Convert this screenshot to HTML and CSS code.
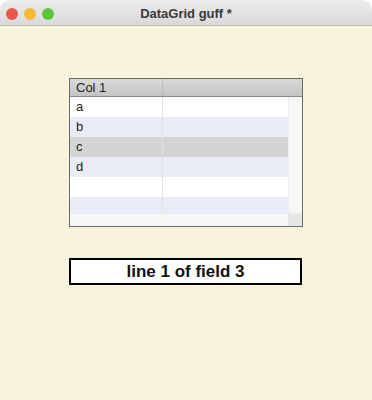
FILE: index.html
```html
<!DOCTYPE html>
<html>
<head>
<meta charset="utf-8">
<link rel="stylesheet" href="styles.css">
</head>
<body>
<div class="window">
  <div class="titlebar">
    <div class="lights">
      <span class="light red"></span>
      <span class="light yellow"></span>
      <span class="light green"></span>
    </div>
    <div class="title">DataGrid guff *</div>
  </div>
  <div class="content">
    <div class="grid">
      <div class="header">
        <div class="hcell c1">Col 1</div>
        <div class="hcell c2"></div>
      </div>
      <div class="middle">
        <div class="rows">
          <div class="row"><div class="cell c1">a</div><div class="cell c2"></div></div>
          <div class="row alt"><div class="cell c1">b</div><div class="cell c2"></div></div>
          <div class="row sel"><div class="cell c1">c</div><div class="cell c2"></div></div>
          <div class="row alt"><div class="cell c1">d</div><div class="cell c2"></div></div>
          <div class="row"><div class="cell c1"></div><div class="cell c2"></div></div>
          <div class="row alt"><div class="cell c1"></div><div class="cell c2"></div></div>
        </div>
        <div class="vscroll"></div>
      </div>
      <div class="bottom">
        <div class="hscroll"></div>
        <div class="corner"></div>
      </div>
    </div>
    <div class="field">line 1 of field 3</div>
  </div>
</div>
</body>
</html>
```
FILE: styles.css
```css
html, body {
  margin: 0;
  padding: 0;
  background: #ffffff;
}
.window {
  width: 372px;
  height: 400px;
  background: #f8f3dc;
  border-radius: 10px 10px 0 0;
  overflow: hidden;
  font-family: "Liberation Sans", Arial, sans-serif;
}
.titlebar {
  height: 25px;
  border-bottom: 1px solid #b9b9b9;
  background: linear-gradient(#ececec, #d9d9d9);
  display: flex;
  align-items: center;
  position: relative;
}
.lights {
  display: flex;
  gap: 6px;
  padding-left: 6px;
  position: absolute;
  left: 0;
  top: 8px;
}
.light {
  width: 12px;
  height: 12px;
  border-radius: 50%;
  display: block;
}
.red { background: #e9574f; }
.yellow { background: #f2b93a; }
.green { background: #5fc53f; }
.title {
  flex: 1;
  text-align: center;
  font-weight: bold;
  font-size: 13px;
  color: #3a3a3a;
  padding-top: 1px;
}
.content {
  padding-top: 52px;
  padding-left: 69px;
}
.grid {
  width: 232px;
  height: 147px;
  border: 1px solid #6a6a6a;
  background: #fff;
  display: flex;
  flex-direction: column;
  font-size: 13px;
  color: #222;
}
.header {
  height: 17px;
  border-bottom: 1px solid #8a8a8a;
  background: linear-gradient(#dadada, #c3c3c3);
  display: flex;
}
.hcell {
  line-height: 17px;
  padding-left: 6px;
  box-sizing: border-box;
}
.c1 {
  width: 93px;
  border-right: 1px solid #e2e2e2;
  box-sizing: border-box;
  padding-left: 6px;
}
.hcell.c1 { border-right-color: #bdbdbd; }
.c2 { flex: 1; }
.middle {
  flex: 1;
  display: flex;
  overflow: hidden;
}
.rows {
  flex: 1;
  overflow: hidden;
}
.row {
  height: 20px;
  display: flex;
  background: #fff;
}
.row.alt { background: #e8ecf6; }
.row.sel { background: #d4d4d4; }
.cell {
  line-height: 20px;
}
.vscroll {
  width: 13px;
  background: #f7f7f7;
  border-left: 1px solid #ececec;
}
.bottom {
  height: 12px;
  display: flex;
  border-top: 1px solid #ececec;
}
.hscroll {
  flex: 1;
  background: #f7f7f7;
}
.corner {
  width: 14px;
  background: #e6e6e6;
}
.field {
  margin-top: 31px;
  width: 229px;
  height: 23px;
  border: 2px solid #000;
  background: #fff;
  text-align: center;
  font-weight: bold;
  font-size: 17px;
  line-height: 23px;
  color: #111;
}
```
